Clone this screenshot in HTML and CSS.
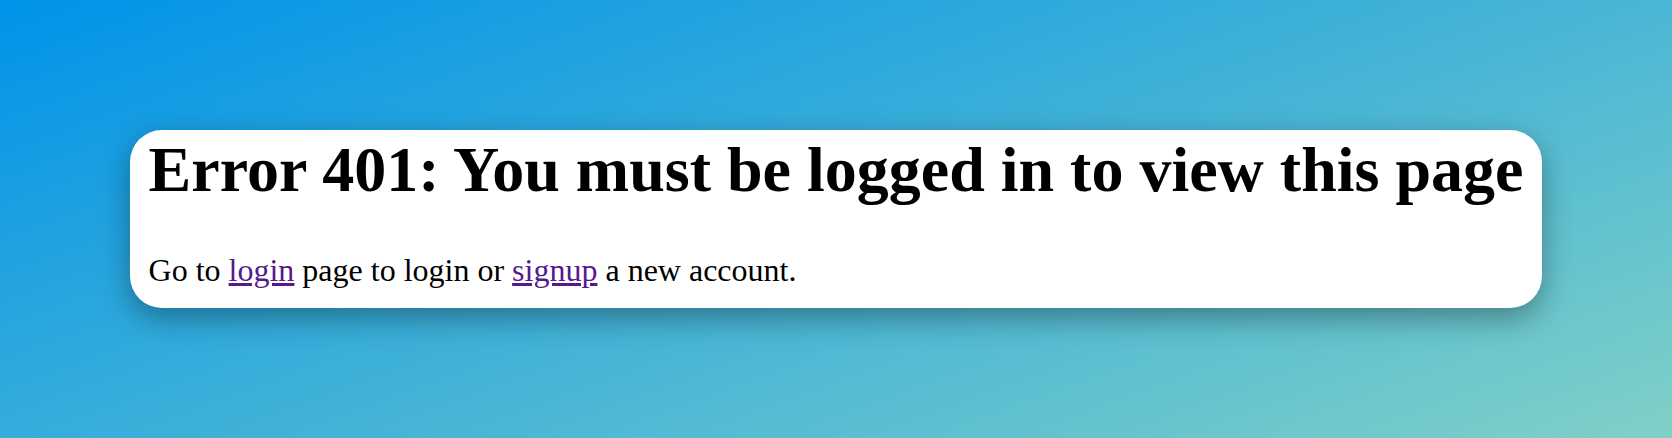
FILE: index.html
```html
<!DOCTYPE html>
<html lang="en">
<head>
<meta charset="utf-8">
<title>Error 401</title>
<link rel="stylesheet" href="styles.css">
</head>
<body>
<main class="stage">
  <section class="card">
    <h1 class="title">Error 401: You must be logged in to view this page</h1>
    <p class="message">Go to <a class="link" href="#login">login</a> page to login or <a class="link" href="#signup">signup</a> a new account.</p>
  </section>
</main>
</body>
</html>
```
FILE: styles.css
```css
html, body {
  margin: 0;
  padding: 0;
  height: 100%;
}

body {
  font-family: "Liberation Serif", "Times New Roman", serif;
  background-image: linear-gradient(160deg, #0093E9 0%, #80D0C7 100%);
  color: #000;
}

.stage {
  height: 100%;
  display: flex;
  align-items: center;
  justify-content: center;
}

.card {
  background: #fff;
  border-radius: 32px;
  padding: 3px 19px 19px;
  box-shadow: 0 10px 30px rgba(0, 0, 0, 0.35);
  width: fit-content;
}

.title {
  font-size: 64px;
  font-weight: bold;
  margin: 0 0 45px;
  white-space: nowrap;
}

.message {
  font-size: 32px;
  margin: 0;
}

.link {
  color: #551A8B;
  text-decoration: underline;
}
```
